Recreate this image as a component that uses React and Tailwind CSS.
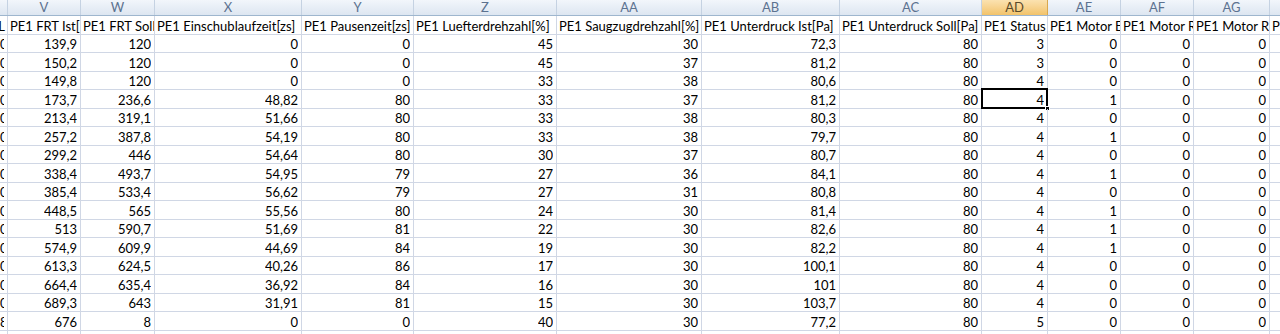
import React from "react";

const cols = [
  { w: "w-[8px]", letter: "", title: "L", clipRight: true },
  { w: "w-[73px]", letter: "V", title: "PE1 FRT Ist[°C]" },
  { w: "w-[74px]", letter: "W", title: "PE1 FRT Soll[°C]" },
  { w: "w-[147px]", letter: "X", title: "PE1 Einschublaufzeit[zs]" },
  { w: "w-[112px]", letter: "Y", title: "PE1 Pausenzeit[zs]" },
  { w: "w-[143px]", letter: "Z", title: "PE1 Luefterdrehzahl[%]" },
  { w: "w-[145px]", letter: "AA", title: "PE1 Saugzugdrehzahl[%]" },
  { w: "w-[138px]", letter: "AB", title: "PE1 Unterdruck Ist[Pa]" },
  { w: "w-[142px]", letter: "AC", title: "PE1 Unterdruck Soll[Pa]" },
  { w: "w-[66px]", letter: "AD", title: "PE1 Status", sel: true },
  { w: "w-[73px]", letter: "AE", title: "PE1 Motor ES" },
  { w: "w-[73px]", letter: "AF", title: "PE1 Motor RA" },
  { w: "w-[76px]", letter: "AG", title: "PE1 Motor RE" },
  { w: "w-[40px]", letter: "AH", title: "PE1 Motor" },
];

const rows = [
  ["0", "139,9", "120", "0", "0", "45", "30", "72,3", "80", "3", "0", "0", "0"],
  ["0", "150,2", "120", "0", "0", "45", "37", "81,2", "80", "3", "0", "0", "0"],
  ["0", "149,8", "120", "0", "0", "33", "38", "80,6", "80", "4", "0", "0", "0"],
  ["0", "173,7", "236,6", "48,82", "80", "33", "37", "81,2", "80", "4", "1", "0", "0"],
  ["0", "213,4", "319,1", "51,66", "80", "33", "38", "80,3", "80", "4", "0", "0", "0"],
  ["0", "257,2", "387,8", "54,19", "80", "33", "38", "79,7", "80", "4", "1", "0", "0"],
  ["0", "299,2", "446", "54,64", "80", "30", "37", "80,7", "80", "4", "0", "0", "0"],
  ["0", "338,4", "493,7", "54,95", "79", "27", "36", "84,1", "80", "4", "1", "0", "0"],
  ["0", "385,4", "533,4", "56,62", "79", "27", "31", "80,8", "80", "4", "0", "0", "0"],
  ["0", "448,5", "565", "55,56", "80", "24", "30", "81,4", "80", "4", "1", "0", "0"],
  ["0", "513", "590,7", "51,69", "81", "22", "30", "82,6", "80", "4", "1", "0", "0"],
  ["0", "574,9", "609,9", "44,69", "84", "19", "30", "82,2", "80", "4", "1", "0", "0"],
  ["0", "613,3", "624,5", "40,26", "86", "17", "30", "100,1", "80", "4", "0", "0", "0"],
  ["0", "664,4", "635,4", "36,92", "84", "16", "30", "101", "80", "4", "0", "0", "0"],
  ["0", "689,3", "643", "31,91", "81", "15", "30", "103,7", "80", "4", "0", "0", "0"],
  ["8", "676", "8", "0", "0", "40", "30", "77,2", "80", "5", "0", "0", "0"],
  ["", "", "", "", "", "", "", "", "", "", "", "", ""],
];

const font = { fontFamily: "Lato, 'Open Sans', 'Liberation Sans', sans-serif" };

export default function App() {
  return (
    <div className="w-[1280px] h-[334px] overflow-hidden bg-white text-[13px] text-black" style={font}>
      {/* column letters */}
      <div className="flex h-[16px] border-b border-[#9eb6ce]">
        {cols.map((c, i) => (
          <div
            key={i}
            className={`${c.w} shrink-0 h-full flex items-center justify-center border-r text-[13px] leading-none ${
              c.sel
                ? "bg-gradient-to-b from-[#fbe2b0] to-[#f2c36a] border-[#d9a84e] text-[#5a4a2a]"
                : "bg-gradient-to-b from-[#f2f6fb] to-[#dde6f1] border-[#c5d2e2] text-[#5c7290]"
            }`}
          >
            {c.letter}
          </div>
        ))}
      </div>
      {/* title row */}
      <div className="flex h-[19px] border-b border-[#d0d7e5]">
        {cols.map((c, i) => (
          <div
            key={i}
            className={`${c.w} shrink-0 h-full overflow-hidden whitespace-nowrap border-r border-[#d0d7e5] flex items-end pb-[1px] leading-none ${
              c.clipRight ? "justify-end pr-[2px]" : "pl-[2px]"
            }`}
          >
            {c.title}
          </div>
        ))}
      </div>
      {rows.map((r, ri) => (
        <div
          key={ri}
          className={`flex border-b border-[#d0d7e5] ${ri % 2 === 0 ? "h-[18px]" : "h-[19px]"}`}
        >
          {cols.map((c, ci) => (
            <div
              key={ci}
              className={`${c.w} shrink-0 h-full relative overflow-visible whitespace-nowrap border-r border-[#d0d7e5] flex items-end justify-end pr-[3px] pb-[1px] leading-none`}
            >
              <span className="block overflow-hidden">{r[ci] ?? ""}</span>
              {ri === 3 && ci === 9 && (
                <div className="absolute -left-[1px] -top-[2px] -right-[1px] -bottom-[1px] border-2 border-black pointer-events-none">
                  <div className="absolute -right-[4px] -bottom-[4px] w-[5px] h-[5px] bg-black border border-white" />
                </div>
              )}
            </div>
          ))}
        </div>
      ))}
    </div>
  );
}
